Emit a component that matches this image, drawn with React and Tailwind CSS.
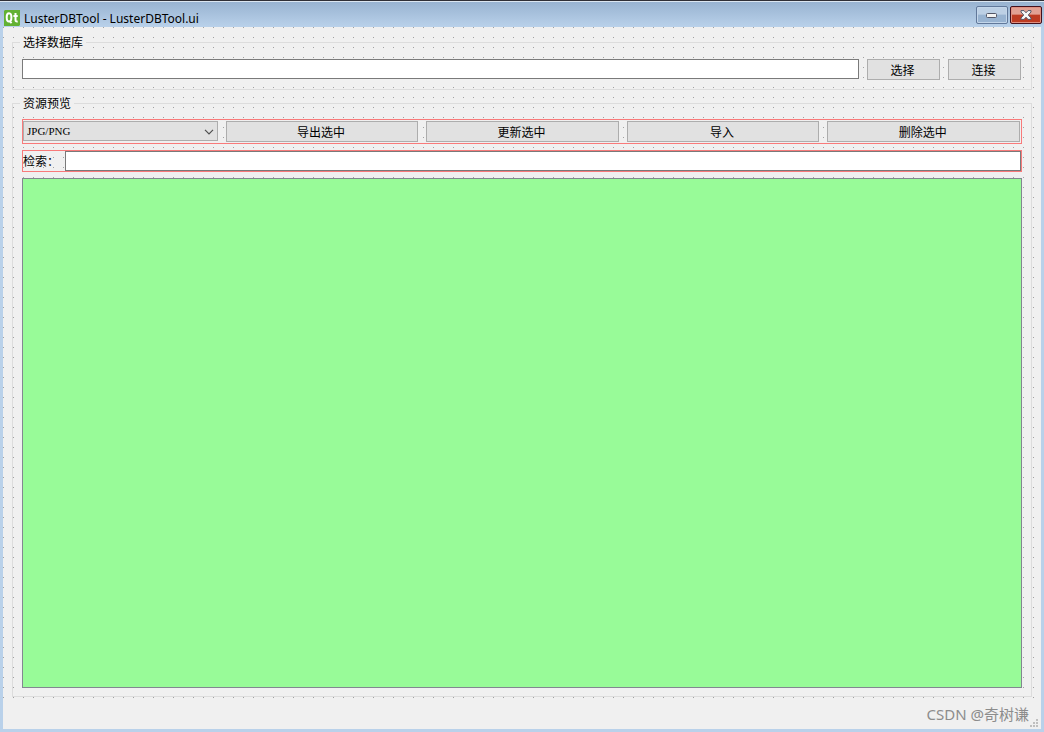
const actions = ['导出选中', '更新选中', '导入', '删除选中'];

const buttonStyle =
  'flex h-[21px] items-center justify-center border border-[#adadad] bg-[#e1e1e1] pt-[2px] pr-[2px] text-[12px] leading-none text-black';

function QtLogo() {
  return (
    <svg viewBox="0 0 16 16" className="h-4 w-4 shrink-0" aria-hidden="true">
      <path d="M1 0H16V15L15 16H0V1Z" fill="#62b132" />
      <path
        fill="none"
        stroke="#fff"
        strokeWidth="2"
        d="M5 3.3C3.4 3.3 2.7 4.8 2.7 7.3S3.4 11.5 5 11.5S7.4 9.8 7.4 7.3S6.7 3.3 5 3.3ZM5.6 11L7.6 13.2M11.5 3V10C11.5 11.3 12 11.6 13.7 11.4M9.4 5.9H13.7"
      />
    </svg>
  );
}

function TitleBar() {
  return (
    <header className="flex h-[27px] shrink-0 items-start border-t border-[#2f2f36] bg-linear-to-b from-[#97b2d0] to-[#b9d1ea] pr-[2px] pl-1 shadow-[inset_0_1px_0_#dbe6f1]">
      <div className="flex flex-1 items-start gap-1 pt-[9px]">
        <QtLogo />
        <h1 className="text-[12px] leading-[18px] text-black">LusterDBTool - LusterDBTool.ui</h1>
      </div>
      <div className="flex gap-[2px] pt-[5px]">
        <button
          type="button"
          aria-label="最小化"
          className="flex h-[18px] w-8 items-center justify-center rounded-[2px] border border-[#61789a] bg-linear-to-b from-[#bdd0e5] from-45% to-[#98b3d1] to-50% shadow-[inset_0_0_0_1px_#c3d6ea]"
        >
          <svg viewBox="0 0 12 6" className="mt-[2px] h-[6px] w-3" aria-hidden="true">
            <rect x="0.5" y="0.5" width="10" height="4" rx="1" fill="#f3f3f3" stroke="#535666" />
          </svg>
        </button>
        <button
          type="button"
          aria-label="关闭"
          className="flex h-[18px] w-8 items-center justify-center rounded-[2px] border border-[#43101c] bg-linear-to-b from-[#e2a093] from-45% to-[#bd3b22] to-50% shadow-[inset_0_0_0_1px_#e08f80]"
        >
          <svg viewBox="0 0 12 10" className="h-[10px] w-3" aria-hidden="true">
            <path
              d="M1 0.6H4L6 2.8L8 0.6H11V2L8.3 5L11 8V9.4H8L6 7.2L4 9.4H1V8L3.7 5L1 2Z"
              fill="#f6f6f6"
              stroke="#535666"
            />
          </svg>
        </button>
      </div>
    </header>
  );
}

function Group({ title, className, children }) {
  return (
    <fieldset className={`min-w-0 border border-[#dcdcdc] px-[9px] ${className}`}>
      <legend className="-ml-[2px] h-[15px] bg-[#f0f0f0] pr-[3px] pl-[3px] text-[12px] leading-[15px] text-black">
        {title}
      </legend>
      {children}
    </fieldset>
  );
}

function SizeGrip() {
  return (
    <svg viewBox="0 0 8 8" className="absolute right-[3px] bottom-[2px] h-2 w-2" aria-hidden="true">
      <path d="M6 0h2v2h-2zM3 3h2v2h-2zM6 3h2v2h-2zM0 6h2v2h-2zM3 6h2v2h-2zM6 6h2v2h-2z" fill="#bfbfbf" />
    </svg>
  );
}

export default function App() {
  return (
    <div className="flex min-h-screen flex-col bg-[#b9d1ea] font-['Noto_Sans','Noto_Sans_CJK_SC',sans-serif]">
      <TitleBar />
      <div className="mx-[3px] mb-[3px] flex flex-1 flex-col bg-[#f0f0f0]">
        <main className="flex flex-1 flex-col gap-[6px] bg-[conic-gradient(from_270deg_at_1px_1px,#a0a0a0_90deg,transparent_0)] bg-size-[10px_10px] px-[9px] pt-2 pb-px">
          <Group title="选择数据库" className="pt-[9px] pb-[9px]">
            <div className="flex items-start gap-2 pr-px">
              <input
                type="text"
                aria-label="数据库路径"
                className="h-5 min-w-0 flex-1 border border-[#7a7a7a] bg-white px-1 text-[12px]"
              />
              <button type="button" className={`w-[73px] ${buttonStyle}`}>选择</button>
              <button type="button" className={`w-[73px] ${buttonStyle}`}>连接</button>
            </div>
          </Group>
          <Group title="资源预览" className="pt-2 pb-2">
            <div className="flex flex-col gap-[6px]">
              <div className="grid h-[25px] grid-cols-[195fr_193fr_193fr_193fr_193fr] items-start gap-2 border border-[#f87a7a] pt-px pr-px">
                <div className="relative min-w-0">
                  <select
                    aria-label="资源类型"
                    className="block h-5 w-full appearance-none border border-[#adadad] bg-[#e1e1e1] pl-[3px] font-['Liberation_Serif','Noto_Sans_CJK_SC',serif] text-[11px] leading-none text-black"
                  >
                    <option>JPG/PNG</option>
                  </select>
                  <svg viewBox="0 0 10 6" className="pointer-events-none absolute top-2 right-1 h-[6px] w-[10px]" aria-hidden="true">
                    <path d="M1 0.8L5 4.8L9 0.8" fill="none" stroke="#505050" strokeWidth="1.2" />
                  </svg>
                </div>
                {actions.map((label) => (
                  <button key={label} type="button" className={`min-w-0 ${buttonStyle}`}>
                    {label}
                  </button>
                ))}
              </div>
              <div className="flex h-[22px] items-stretch border border-[#f87a7a]">
                <label htmlFor="search" className="w-[42px] shrink-0 pt-px text-[12px] leading-5 text-black">
                  检索：
                </label>
                <input
                  id="search"
                  type="text"
                  className="min-w-0 flex-1 border border-[#7a7a7a] bg-white px-1 text-[12px]"
                />
              </div>
              <section
                aria-label="资源预览"
                className="min-h-[calc(100vh-222px)] border border-[#828790] bg-[#98fb98]"
              />
            </div>
          </Group>
        </main>
        <footer className="relative flex h-[31px] shrink-0 items-center justify-end pt-[2px] pr-3 text-[15px] leading-none text-[#8c8c8c]">
          <span>CSDN @奇树谦</span>
          <SizeGrip />
        </footer>
      </div>
    </div>
  );
}
